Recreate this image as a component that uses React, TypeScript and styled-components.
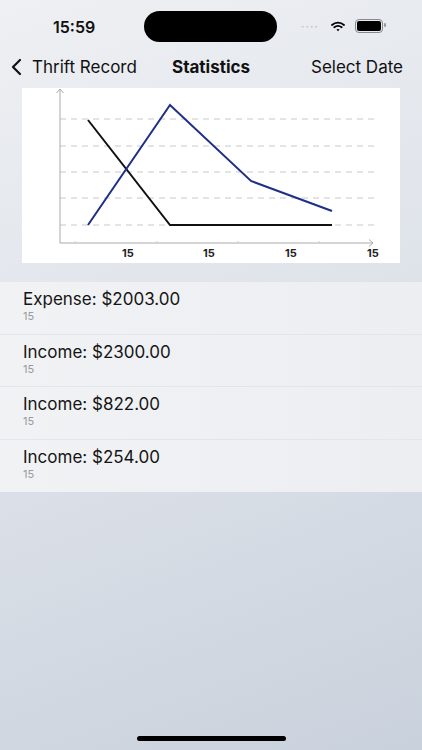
import React from "react";
import styled, { createGlobalStyle } from "styled-components";

const GlobalStyle = createGlobalStyle`
  html, body {
    margin: 0;
    padding: 0;
  }
  body {
    font-family: Inter, "Noto Sans", "Liberation Sans", sans-serif;
    color: #111;
  }
`;

type Entry = { title: string; date: string };

const entries: Entry[] = [
  { title: "Expense: $2003.00", date: "15" },
  { title: "Income: $2300.00", date: "15" },
  { title: "Income: $822.00", date: "15" },
  { title: "Income: $254.00", date: "15" },
];

const App: React.FC = () => {
  return (
    <Screen>
      <GlobalStyle />
      <StatusBar>
        <Time>15:59</Time>
        <Island />
        <StatusIcons>
          <Signal>····</Signal>
          <svg width="14" height="11" viewBox="0 0 14 11">
            <path d="M1 4 A9 9 0 0 1 13 4" stroke="#000" strokeWidth="1.8" fill="none" strokeLinecap="round" />
            <path d="M3.3 6.3 A6 6 0 0 1 10.7 6.3" stroke="#000" strokeWidth="1.8" fill="none" strokeLinecap="round" />
            <path d="M5.4 8.6 A3 3 0 0 1 8.6 8.6 L7 10.3 Z" fill="#000" />
          </svg>
          <Battery>
            <BatteryFill />
          </Battery>
        </StatusIcons>
      </StatusBar>

      <NavBar>
        <BackButton>
          <svg width="12" height="18" viewBox="0 0 12 18">
            <path d="M10 2 L3 9 L10 16" stroke="#111" strokeWidth="2.2" fill="none" strokeLinecap="round" strokeLinejoin="round" />
          </svg>
          <span>Thrift Record</span>
        </BackButton>
        <NavTitle>Statistics</NavTitle>
        <NavAction>Select Date</NavAction>
      </NavBar>

      <ChartCard>
        <svg width="378" height="175" viewBox="0 0 378 175">
          {[31, 58, 84, 110, 137].map((y) => (
            <line key={y} x1="38" y1={y} x2="357" y2={y} stroke="#c8c8c8" strokeWidth="1" strokeDasharray="6 5" />
          ))}
          <line x1="38" y1="1" x2="38" y2="155" stroke="#aaa" strokeWidth="1" />
          <path d="M34.5 5 L38 1 L41.5 5" stroke="#aaa" strokeWidth="1" fill="none" />
          <line x1="38" y1="155" x2="351" y2="155" stroke="#aaa" strokeWidth="1" />
          <path d="M347 151.5 L351 155 L347 158.5" stroke="#aaa" strokeWidth="1" fill="none" />
          {[53, 135, 216, 297].map((x) => (
            <line key={x} x1={x} y1="153" x2={x} y2="155" stroke="#ccc" strokeWidth="1" />
          ))}
          <polyline points="66,32 148,137 310,137" stroke="#111" strokeWidth="2" fill="none" />
          <polyline points="66,137 148,17 229,93 310,123" stroke="#1d2f86" strokeWidth="2" fill="none" />
          {[106, 187, 269, 351].map((x) => (
            <text key={x} x={x} y="169" textAnchor="middle" fontSize="11" fontWeight="700" fill="#222" fontFamily="Inter, sans-serif">
              15
            </text>
          ))}
        </svg>
      </ChartCard>

      <List>
        {entries.map((e, i) => (
          <Row key={i} $last={i === entries.length - 1}>
            <RowTitle>{e.title}</RowTitle>
            <RowDate>{e.date}</RowDate>
          </Row>
        ))}
      </List>

      <HomeIndicator />
    </Screen>
  );
};

export default App;

const Screen = styled.div`
  width: 422px;
  height: 750px;
  display: flex;
  flex-direction: column;
  overflow: hidden;
  background: linear-gradient(160deg, #eef0f3 0%, #dfe3ea 45%, #c9d1dc 100%);
`;

const StatusBar = styled.div`
  height: 52px;
  display: grid;
  grid-template-columns: 144px 133px 1fr;
  align-items: center;
`;

const Time = styled.div`
  font-size: 16px;
  font-weight: 600;
  padding-left: 53px;
  margin-top: 1px;
`;

const Island = styled.div`
  height: 31px;
  margin-top: 1px;
  border-radius: 16px;
  background: #000;
`;

const StatusIcons = styled.div`
  display: flex;
  align-items: center;
  padding-left: 24px;
  gap: 10px;
`;

const Signal = styled.span`
  font-size: 12px;
  color: #b8bcc4;
  letter-spacing: 1px;
  margin-right: 2px;
`;

const Battery = styled.div`
  width: 24px;
  height: 10px;
  border: 1.5px solid #888;
  border-radius: 4px;
  padding: 1px;
  position: relative;

  &::after {
    content: "";
    position: absolute;
    right: -4px;
    top: 3px;
    width: 1.5px;
    height: 4px;
    background: #999;
    border-radius: 1px;
  }
`;

const BatteryFill = styled.div`
  width: 100%;
  height: 100%;
  background: #000;
  border-radius: 2px;
`;

const NavBar = styled.div`
  height: 30px;
  display: flex;
  align-items: center;
  justify-content: space-between;
  padding: 0 19px 2px 10px;
  font-size: 17px;
`;

const BackButton = styled.div`
  display: flex;
  align-items: center;
  gap: 10px;
  width: 128px;
  white-space: nowrap;
`;

const NavTitle = styled.div`
  font-weight: 700;
  margin-left: 34px;
`;

const NavAction = styled.div`
  margin-left: auto;
`;

const ChartCard = styled.div`
  margin: 4px 22px 0;
  height: 175px;
  background: #fff;
  display: flex;
`;

const List = styled.div`
  margin-top: 19px;
  background: linear-gradient(90deg, #f1f2f4 0%, #eceef2 100%);
`;

const Row = styled.div<{ $last: boolean }>`
  height: 52.5px;
  box-sizing: border-box;
  padding: 7px 23px 0;
  border-bottom: ${({ $last }) => ($last ? "none" : "1px solid #e2e5ea")};
`;

const RowTitle = styled.div`
  font-size: 17px;
  line-height: 20px;
  color: #151515;
`;

const RowDate = styled.div`
  font-size: 11px;
  line-height: 13px;
  color: #9a9a9a;
  margin-top: 1px;
`;

const HomeIndicator = styled.div`
  margin: auto auto 9px;
  width: 149px;
  height: 5px;
  border-radius: 3px;
  background: #000;
`;
